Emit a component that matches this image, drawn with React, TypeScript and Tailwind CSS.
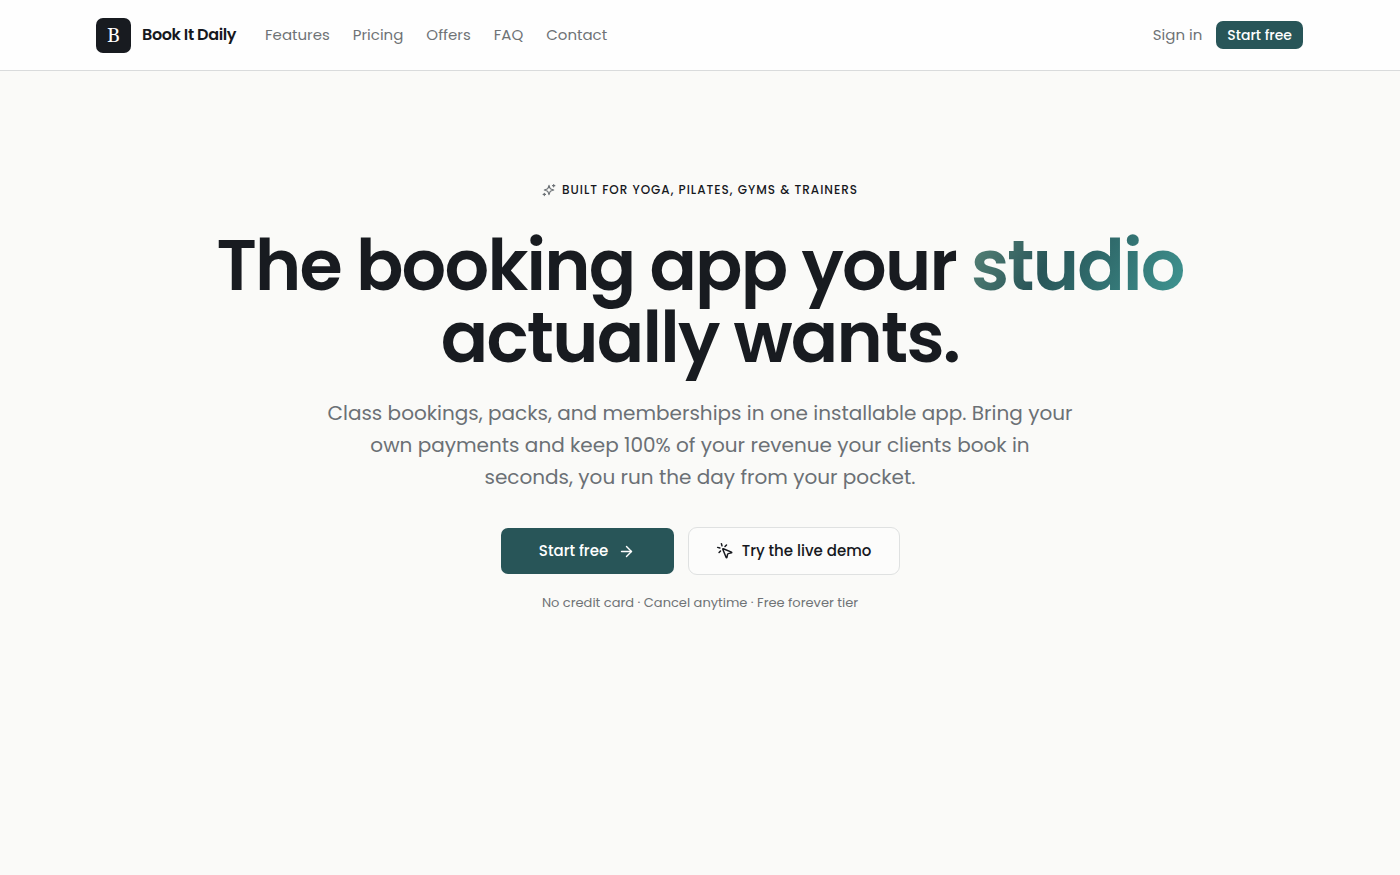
import { ArrowRight, MousePointerClick } from "lucide-react";

const navLinks = ["Features", "Pricing", "Offers", "FAQ", "Contact"];

function SparkleIcon() {
	return (
		<svg
			viewBox="0 0 24 24"
			className="size-3.5 text-[#6b7075]"
			fill="none"
			stroke="currentColor"
			strokeWidth="2"
			strokeLinecap="round"
			strokeLinejoin="round"
			aria-hidden="true"
		>
			<path d="M12 4l1.700 4.800a2.500 2.500 0 0 0 1.500 1.500L20 12l-4.800 1.700a2.500 2.500 0 0 0-1.500 1.500L12 20l-1.700-4.800a2.500 2.500 0 0 0-1.500-1.500L4 12l4.800-1.700a2.500 2.500 0 0 0 1.500-1.500Z" />
			<path d="M20 2.500v4M22 4.500h-4" />
			<path d="M4 17.500v4M6 19.500H2" />
		</svg>
	);
}

function Header() {
	return (
		<header className="border-b border-[#d9dbdc] bg-[#fefefe]">
			<div className="mx-auto flex h-[70px] max-w-[1256px] items-center pr-[25px] pl-6">
				<a href="#" className="flex items-center gap-[11px]">
					<span className="flex size-[35px] items-center justify-center rounded-[7px] bg-[#181b20] font-['Noto_Serif','Liberation_Serif',serif] text-xl text-white">
						B
					</span>
					<span className="text-base font-semibold tracking-tight text-[#16181d]">
						Book It Daily
					</span>
				</a>
				<nav className="ml-[29px] flex items-center gap-[23px] text-[15px] text-[#6f7376]">
					{navLinks.map(link => (
						<a key={link} href={`#${link.toLowerCase()}`}>
							{link}
						</a>
					))}
				</nav>
				<div className="ml-auto flex items-center gap-3.5">
					<a href="#sign-in" className="text-[15px] text-[#6f7376]">
						Sign in
					</a>
					<button
						type="button"
						className="h-7 rounded-[7px] bg-[#285558] px-[11px] text-sm font-medium text-white"
					>
						Start free
					</button>
				</div>
			</div>
		</header>
	);
}

function Hero() {
	return (
		<main className="flex flex-col items-center px-6 pt-[109px] text-center">
			<p className="flex items-center gap-1.5 text-xs leading-5 font-medium tracking-[1px] text-[#16181d] uppercase">
				<SparkleIcon />
				Built for yoga, pilates, gyms &amp; trainers
			</p>
			<h1 className="mt-[30px] text-[70px] leading-[72px] font-semibold tracking-tight text-[#181b20]">
				The booking app your{" "}
				<span className="bg-[linear-gradient(120deg,#5f8b7d_0%,#285558_38%,#419a96_100%)] bg-clip-text text-transparent">
					studio
				</span>
				<br />
				actually wants.
			</h1>
			<p className="mt-[23px] max-w-[750px] text-xl leading-8 text-[#6b7075]">
				Class bookings, packs, and memberships in one installable app. Bring your
				<br />
				own payments and keep 100% of your revenue your clients book in
				<br />
				seconds, you run the day from your pocket.
			</p>
			<div className="mt-[34px] flex items-center gap-3.5">
				<button
					type="button"
					className="flex h-[46px] w-[173px] items-center justify-center gap-2.5 rounded-[7px] bg-[#285558] text-[15px] font-medium text-white"
				>
					Start free
					<ArrowRight size={17} />
				</button>
				<button
					type="button"
					className="flex h-12 w-[212px] items-center justify-center gap-2 rounded-[9px] border border-[#dfe1e1] bg-[#fcfcfb] text-[15px] font-medium text-[#16181d]"
				>
					<MousePointerClick size={18} />
					Try the live demo
				</button>
			</div>
			<p className="mt-[18px] text-[13px] leading-5 text-[#6f7376]">
				No credit card · Cancel anytime · Free forever tier
			</p>
		</main>
	);
}

export default function App() {
	return (
		<div className="min-h-screen bg-[#fafaf8] font-['Poppins','Inter',sans-serif]">
			<Header />
			<Hero />
		</div>
	);
}
